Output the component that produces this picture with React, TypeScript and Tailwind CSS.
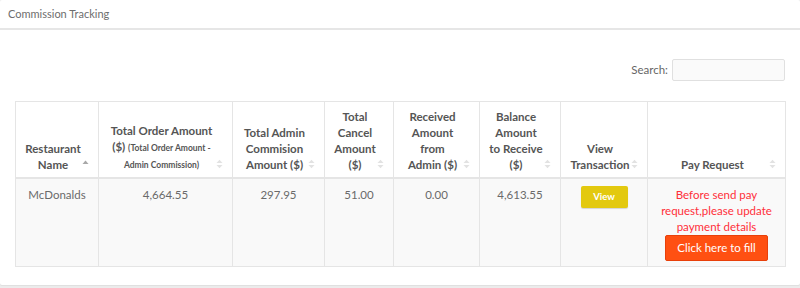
type Column = {
  label: React.ReactNode
  width: string
  sort?: "asc" | "none"
}

// small up/down carets shown at the right of each sortable header
function SortIcon({ active }: { active?: boolean }) {
  if (active) {
    return (
      <svg width="7" height="8" viewBox="0 0 7 8" className="absolute right-[9px] bottom-[10px]">
        <path d="M0.5 5 L3.5 1.5 L6.5 5 Z" fill="#a8a8a8" />
      </svg>
    )
  }
  return (
    <svg width="7" height="10" viewBox="0 0 7 10" className="absolute right-[9px] bottom-[8px]">
      <path d="M0.5 4 L3.5 0.8 L6.5 4 Z" fill="#e2e2e2" />
      <path d="M0.5 6 L3.5 9.2 L6.5 6 Z" fill="#e2e2e2" />
    </svg>
  )
}

const columns: Column[] = [
  { label: <>Restaurant<br />Name</>, width: "w-[83px]", sort: "asc" },
  {
    label: (
      <>
        Total Order Amount
        <br />
        ($) <span className="text-[8.5px]">(Total Order Amount -</span>
        <br />
        <span className="text-[8.5px]">Admin Commission)</span>
      </>
    ),
    width: "w-[134px]",
  },
  { label: <>Total Admin<br />Commision<br />Amount ($)</>, width: "w-[92px]" },
  { label: <>Total<br />Cancel<br />Amount<br />($)</>, width: "w-[69px]" },
  { label: <>Received<br />Amount<br />from<br />Admin ($)</>, width: "w-[86px]" },
  { label: <>Balance<br />Amount<br />to Receive<br />($)</>, width: "w-[81px]" },
  { label: <>View<br />Transaction</>, width: "w-[87px]" },
  { label: <>Pay Request</>, width: "w-[138px]" },
]

export default function App() {
  return (
    <div className="w-[800px] h-[288px] bg-[#ececec] font-['Lato','Open_Sans',sans-serif]">
      <div className="h-[285px] overflow-hidden bg-white rounded-[2px] shadow-[0_1px_1px_rgba(0,0,0,0.06)]">
        <div className="h-[30px] border-b-2 border-[#e6e6e6] px-2 flex items-center">
          <h3 className="text-[11px] text-[#6d6d6d]">Commission Tracking</h3>
        </div>

        <div className="px-[15px] pt-[29px]">
          <div className="flex justify-end items-center gap-1 mb-[20px]">
            <label className="text-[11.5px] text-[#666]">Search:</label>
            <input className="w-[113px] h-[22px] border border-[#e0e0e0] bg-[#fafafa] rounded-[2px] outline-none" />
          </div>

          <table className="w-[770px] table-fixed border-collapse border border-[#e5e5e5] text-[11.5px]">
            <thead>
              <tr className="h-[76px]">
                {columns.map((col, i) => (
                  <th
                    key={i}
                    className={`${col.width} relative align-bottom border border-[#e5e5e5] border-b-2 pl-2 pr-4 pb-[4px] text-center font-bold leading-4 text-[#555]`}
                  >
                    {col.label}
                    <SortIcon active={col.sort === "asc"} />
                  </th>
                ))}
              </tr>
            </thead>
            <tbody>
              <tr className="bg-[#f9f9f9] text-[#6a6a6a] leading-4 h-[87px]">
                <td className="align-top border border-[#e5e5e5] pt-[8px] text-center">McDonalds</td>
                <td className="align-top border border-[#e5e5e5] pt-[8px] text-center">4,664.55</td>
                <td className="align-top border border-[#e5e5e5] pt-[8px] text-center">297.95</td>
                <td className="align-top border border-[#e5e5e5] pt-[8px] text-center">51.00</td>
                <td className="align-top border border-[#e5e5e5] pt-[8px] text-center">0.00</td>
                <td className="align-top border border-[#e5e5e5] pt-[8px] text-center">4,613.55</td>
                <td className="align-top border border-[#e5e5e5] pt-[7px] text-center">
                  <button className="w-[47px] h-[22px] bg-[#e3c90f] rounded-[2px] shadow-[0_1px_1px_rgba(0,0,0,0.15)] text-white text-[9.5px] font-bold">
                    View
                  </button>
                </td>
                <td className="align-top border border-[#e5e5e5] pt-[8px] pb-[5px] text-center">
                  <p className="text-[#ff2f3a] whitespace-nowrap">
                    Before send pay
                    <br />
                    request,please update
                    <br />
                    payment details
                  </p>
                  <button className="block mx-auto w-[103px] h-[26px] bg-[#ff5012] border border-[#e8400a] rounded-[2px] text-white text-[11.5px]">
                    Click here to fill
                  </button>
                </td>
              </tr>
            </tbody>
          </table>
        </div>
      </div>
    </div>
  )
}
